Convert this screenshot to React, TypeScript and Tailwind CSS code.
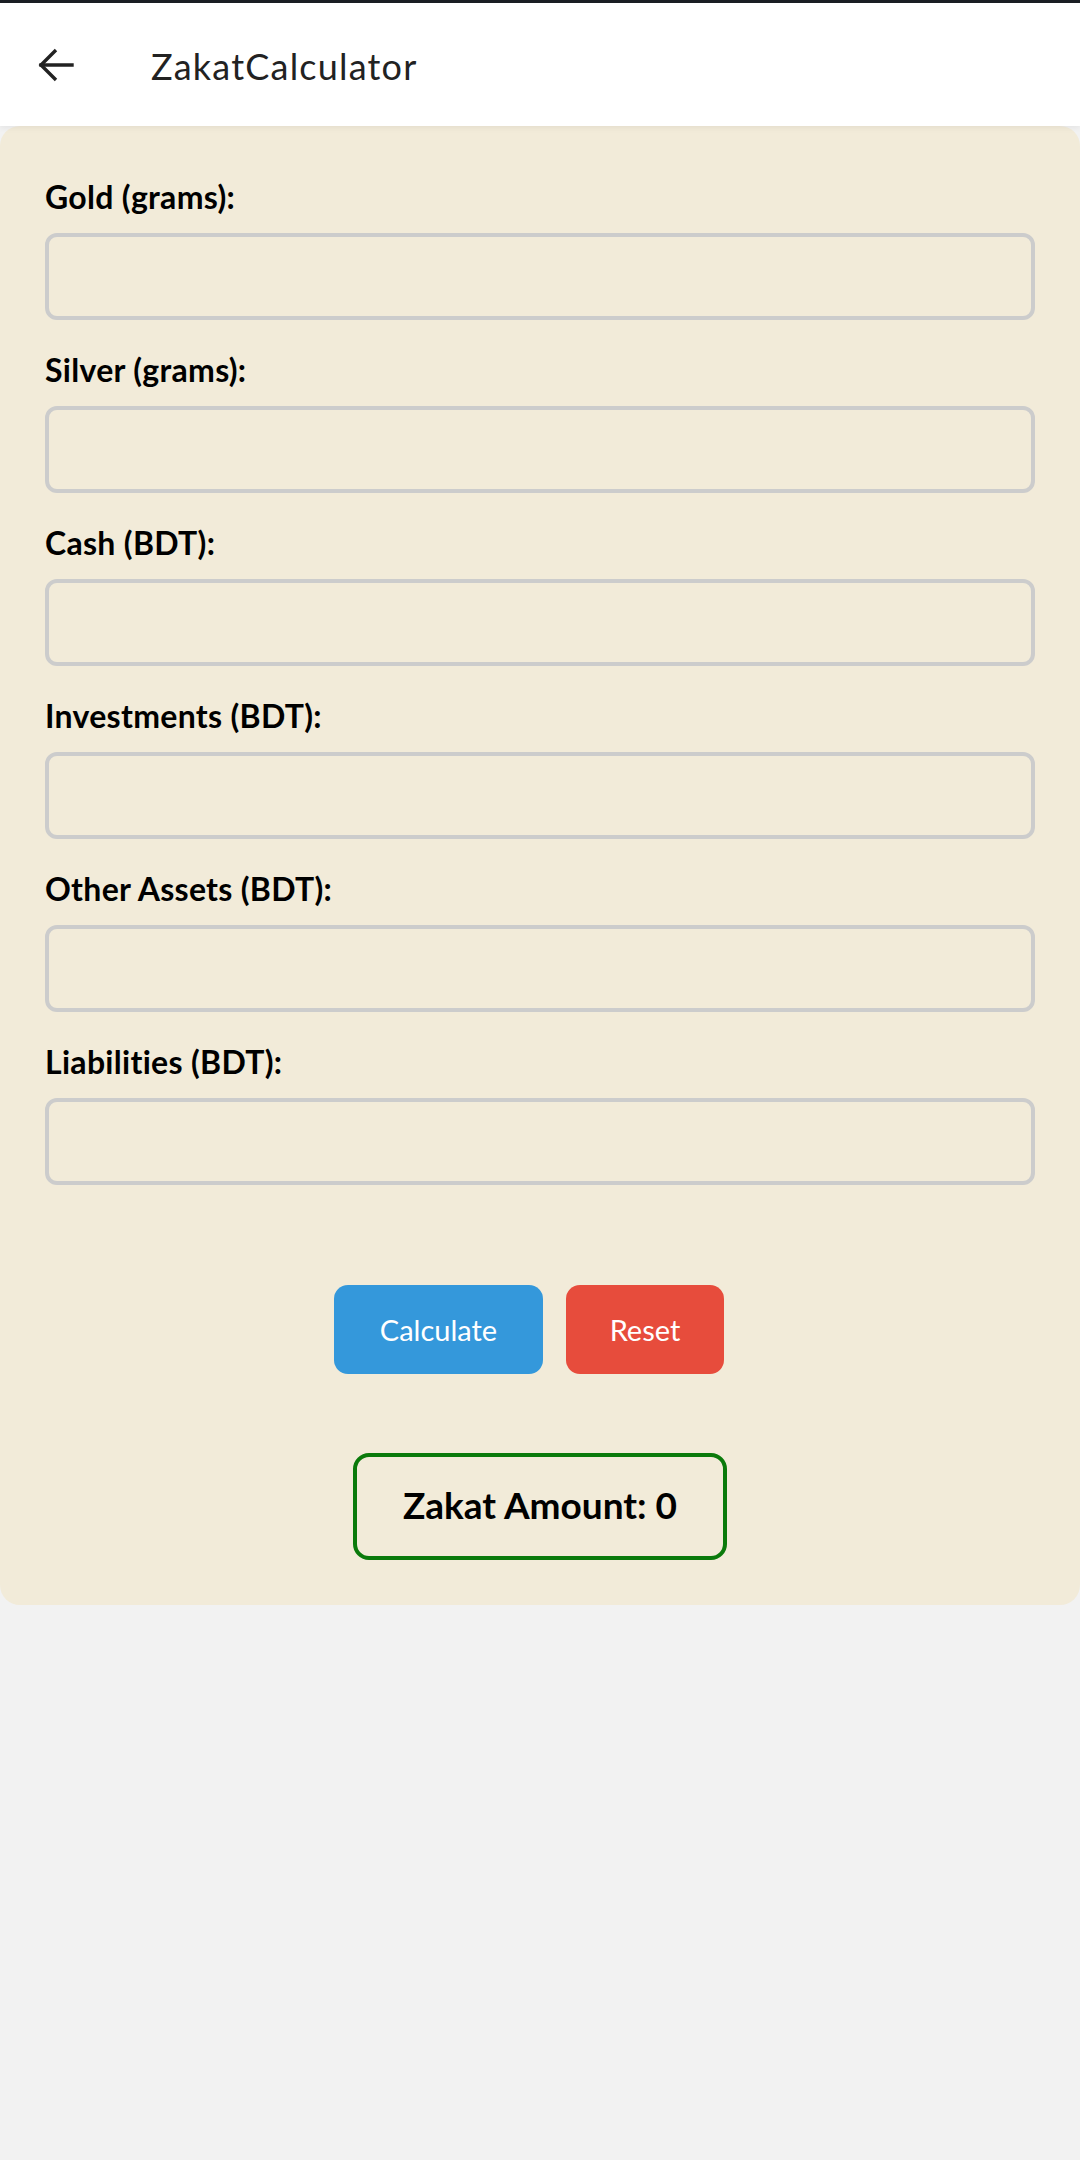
import React from "react";

const fields = [
  "Gold (grams):",
  "Silver (grams):",
  "Cash (BDT):",
  "Investments (BDT):",
  "Other Assets (BDT):",
  "Liabilities (BDT):",
];

export default function App() {
  return (
    <div
      className="w-[1080px] min-h-[2160px] bg-[#f2f2f2] flex flex-col"
      style={{ fontFamily: "Lato, 'Noto Sans', sans-serif" }}
    >
      <div className="h-[3px] bg-[#1b1f24]" />
      <header className="h-[123px] bg-white flex items-center shadow-[0_2px_6px_rgba(0,0,0,0.06)] relative z-10">
        <div className="w-[151px] pl-[38px] flex items-center mt-[1px]">
          <svg width="36" height="36" viewBox="0 0 36 36" fill="none" stroke="#222" strokeWidth="3.4" strokeLinecap="square">
            <path d="M3 18 H34" />
            <path d="M18 3 L3 18 L18 33" strokeLinecap="butt" strokeLinejoin="miter" />
          </svg>
        </div>
        <span className="text-[36px] text-[#222] tracking-[1.2px] mt-[2px]">ZakatCalculator</span>
      </header>
      <main className="bg-[#f2ebd9] rounded-[20px] flex flex-col px-[45px] pt-[53px] pb-[45px]">
        {fields.map((f) => (
          <div key={f} className="flex flex-col mb-[32px]">
            <label className="text-[32px] leading-[36px] font-bold text-black mb-[18px] tracking-[0.3px]">{f}</label>
            <div className="h-[87px] border-[4px] border-[#cccccc] rounded-[12px]" />
          </div>
        ))}
        <div className="flex justify-center gap-[23px] mt-[68px] pr-[22px]">
          <button className="w-[209px] h-[89px] rounded-[14px] bg-[#3498db] text-white text-[29px]">Calculate</button>
          <button className="w-[158px] h-[89px] rounded-[14px] bg-[#e74c3c] text-white text-[29px]">Reset</button>
        </div>
        <div className="flex justify-center mt-[79px]">
          <div className="w-[374px] h-[107px] border-[4px] border-[#0b7a0b] rounded-[16px] flex items-center justify-center">
            <span className="text-[37px] font-bold text-black -mt-[3px]">Zakat Amount: 0</span>
          </div>
        </div>
      </main>
    </div>
  );
}
